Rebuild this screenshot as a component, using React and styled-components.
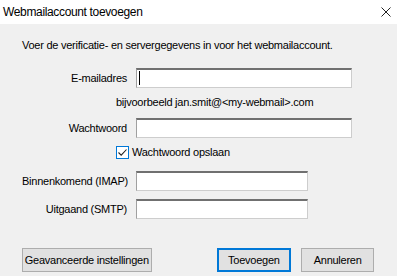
import React from "react";
import styled, { createGlobalStyle } from "styled-components";

const GlobalStyle = createGlobalStyle`
  html, body {
    margin: 0;
    padding: 0;
    background: #f0f0f0;
  }
  body {
    font-family: "Liberation Sans", Arial, sans-serif;
    font-size: 11px;
    letter-spacing: -0.25px;
    color: #000;
  }
`;

const Dialog = styled.div`
  width: 397px;
  height: 276px;
  display: flex;
  flex-direction: column;
  background: #f0f0f0;
  overflow: hidden;
  white-space: nowrap;
`;

const TitleBar = styled.div`
  height: 24px;
  flex: none;
  background: #fff;
  display: flex;
  align-items: center;
  justify-content: space-between;
  padding: 0 6px 0 3px;
`;

const Title = styled.span`
  font-size: 12px;
  letter-spacing: -0.35px;
`;

const Body = styled.div`
  display: flex;
  flex-direction: column;
  padding: 13px 23px 0 22px;
`;

const Intro = styled.div`
  line-height: 16px;
`;

const Row = styled.div`
  display: grid;
  grid-template-columns: 105px 216px;
  column-gap: 9px;
  align-items: center;
  margin-top: ${(p) => p.$mt}px;
`;

const Label = styled.label`
  text-align: right;
  white-space: nowrap;
`;

const Input = styled.div`
  position: relative;
  box-sizing: border-box;
  height: 20px;
  width: ${(p) => p.$w || 216}px;
  background: #fff;
  border: 1px solid #cdcdcd;
  border-top: 2px solid #707070;
  border-left: 1px solid #a0a0a0;
`;

const Caret = styled.span`
  position: absolute;
  left: 2px;
  top: 1px;
  width: 1px;
  height: 14px;
  background: #000;
`;

const Indented = styled.div`
  display: flex;
  align-items: center;
  gap: 3px;
  padding-left: 94px;
  line-height: 16px;
  margin-top: ${(p) => p.$mt}px;
`;

const Check = styled.span`
  box-sizing: border-box;
  width: 13px;
  height: 13px;
  background: #fff;
  border: 1px solid #0078d7;
  display: flex;
  align-items: center;
  justify-content: center;
`;

const Buttons = styled.div`
  display: flex;
  align-items: center;
  margin-top: 29px;
`;

const Button = styled.button`
  box-sizing: border-box;
  height: 24px;
  width: ${(p) => p.$w}px;
  margin-left: ${(p) => p.$ml || 0}px;
  background: #e1e1e1;
  border: ${(p) => (p.$default ? "2px solid #0078d7" : "1px solid #adadad")};
  font-family: inherit;
  font-size: 11px;
  letter-spacing: -0.25px;
  color: #000;
  padding: 0;
  white-space: nowrap;
`;

export default function App() {
  return (
    <>
      <GlobalStyle />
      <Dialog>
        <TitleBar>
          <Title>Webmailaccount toevoegen</Title>
          <svg width="10" height="10" viewBox="0 0 10 10">
            <path d="M0.5 0.5 L9.5 9.5 M9.5 0.5 L0.5 9.5" stroke="#222" strokeWidth="1" />
          </svg>
        </TitleBar>
        <Body>
          <Intro>Voer de verificatie- en servergegevens in voor het webmailaccount.</Intro>
          <Row $mt={15}>
            <Label>E-mailadres</Label>
            <Input>
              <Caret />
            </Input>
          </Row>
          <Indented $mt={6}>bijvoorbeeld jan.smit@&lt;my-webmail&gt;.com</Indented>
          <Row $mt={8}>
            <Label>Wachtwoord</Label>
            <Input />
          </Row>
          <Indented $mt={6}>
            <Check>
              <svg width="11" height="11" viewBox="0 0 11 11">
                <path d="M1.5 5.5 L4.2 8.2 L9.5 2.5" fill="none" stroke="#222" strokeWidth="1.1" />
              </svg>
            </Check>
            Wachtwoord opslaan
          </Indented>
          <Row $mt={11}>
            <Label>Binnenkomend (IMAP)</Label>
            <Input $w={172} />
          </Row>
          <Row $mt={8}>
            <Label>Uitgaand (SMTP)</Label>
            <Input $w={172} />
          </Row>
          <Buttons>
            <Button $w={130}>Geavanceerde instellingen</Button>
            <Button $w={75} $ml={65} $default>Toevoegen</Button>
            <Button $w={73} $ml={10}>Annuleren</Button>
          </Buttons>
        </Body>
      </Dialog>
    </>
  );
}
